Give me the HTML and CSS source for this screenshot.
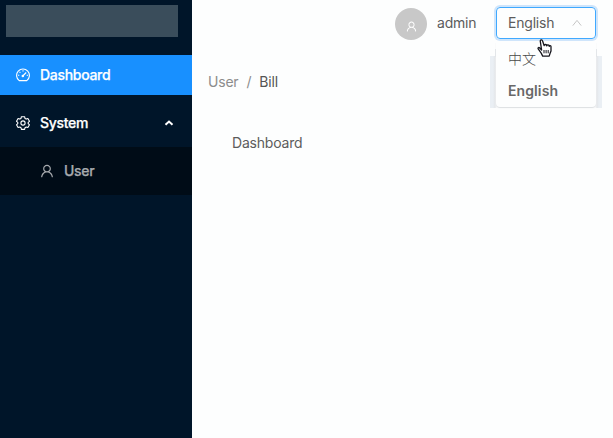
FILE: index.html
```html
<!DOCTYPE html>
<html lang="en">
<head>
<meta charset="utf-8">
<title>Dashboard</title>
<link rel="stylesheet" href="styles.css">
</head>
<body>
<svg class="defs" aria-hidden="true">
  <symbol id="user" viewBox="64 64 896 896"><path fill="currentColor" d="M858.5 763.6a374 374 0 0 0-80.6-119.5 375.63 375.63 0 0 0-119.5-80.6c-.4-.2-.8-.3-1.2-.5C719.5 518 760 444.7 760 362c0-137-111-248-248-248S264 225 264 362c0 82.7 40.5 156 102.8 201.1-.4.2-.8.3-1.2.5-44.8 18.9-85 46-119.5 80.6a375.63 375.63 0 0 0-80.6 119.5A371.7 371.7 0 0 0 136 901.8a8 8 0 0 0 8 8.2h60c4.4 0 7.9-3.5 8-7.8 2-77.2 33-149.5 87.8-204.3 56.7-56.7 132-87.9 212.2-87.9s155.5 31.2 212.2 87.9C779 752.7 810 825 812 902.2c.1 4.4 3.6 7.8 8 7.8h60a8 8 0 0 0 8-8.2c-1-47.8-10.9-94.3-29.5-138.2zM512 534c-45.9 0-89.1-17.9-121.6-50.4S340 407.9 340 362c0-45.9 17.9-89.1 50.4-121.6S466.1 190 512 190s89.1 17.9 121.6 50.4S684 316.1 684 362c0 45.9-17.9 89.1-50.4 121.6S557.9 534 512 534z"/></symbol>
</svg>
<div class="layout">
  <aside class="sider">
    <div class="logo"></div>
    <nav class="menu">
      <a class="item active">
        <svg class="icon" viewBox="0 0 14 14" fill="none" stroke="currentColor" stroke-width="1.1"><path d="M3.2 12.6A6.4 6.4 0 1 1 10.8 12.6Z" stroke-linejoin="round"/><path d="M7 2.2v1.3M3.5 3.8l.9.9M2 7.3h1.3M10.7 7.3H12M6.8 8l3.4-3.5"/><circle cx="6.8" cy="8" r=".7"/></svg>
        <span>Dashboard</span>
      </a>
      <a class="item parent">
        <svg class="icon" viewBox="0 0 14 14" fill="none" stroke="currentColor" stroke-width="1.1" stroke-linejoin="round"><path d="M5.4.7h3.2l.4 1.7 1.2.7 1.7-.6 1.6 2.8-1.3 1.1v1.3l1.3 1.1-1.6 2.7-1.7-.5-1.2.7-.4 1.7H5.4L5 11.7 3.8 11l-1.7.5L.5 8.8l1.3-1.1V6.4L.5 5.3l1.6-2.8 1.7.6L5 2.4Z"/><circle cx="7" cy="7" r="2.1"/></svg>
        <span>System</span>
        <svg class="arrow" viewBox="0 0 10 8" fill="none" stroke="currentColor" stroke-width="2"><path d="M1.5 5.8 5 2.5l3.5 3.3"/></svg>
      </a>
      <div class="submenu">
        <a class="subitem"><svg class="icon"><use href="#user"/></svg><span>User</span></a>
      </div>
    </nav>
  </aside>
  <main class="main">
    <header class="header">
      <div class="avatar"><svg class="avatar-icon"><use href="#user"/></svg></div>
      <span class="name">admin</span>
      <div class="select">
        <span>English</span>
        <svg class="caret" viewBox="0 0 10 8" fill="none" stroke="currentColor"><path d="M.8 6.6 5 1.4l4.2 5.2"/></svg>
        <div class="dropdown">
          <div class="option">中文</div>
          <div class="option selected">English</div>
        </div>
        <svg class="cursor" viewBox="0 0 15 18"><path d="M4.6 11 2.5 8.8C1.7 8 .7 9 1.2 9.9l3 4.2 1.5 3h6.5l.8-2.5 1-2.6V7.6c0-1.3-1.6-1.3-1.8-.3 0-1.7-2.3-1.8-2.5-.5 0-1.7-2.3-1.7-2.6-.3L5.6 2C5.2.4 3 .7 3.3 2.3Z" fill="#fff" stroke="#15151c" stroke-width="1.3" stroke-linejoin="round"/><path d="M7 11v3.3M9.1 11v3.3M11.2 11v3.3" stroke="#15151c"/></svg>
      </div>
    </header>
    <div class="breadcrumb"><span>User</span><span class="separator">/</span><span class="current">Bill</span></div>
    <section class="content">Dashboard</section>
  </main>
</div>
</body>
</html>
```
FILE: styles.css
```css
* { box-sizing: border-box; }
body {
  margin: 0;
  background: #fdfefe;
  color: #5c5c5c;
  font: 14px/22px Inter, "Noto Sans CJK SC", sans-serif;
  letter-spacing: -0.2px;
}
.defs { position: absolute; width: 0; height: 0; }
.layout { display: flex; height: 438px; overflow: hidden; }
.sider { width: 192px; flex: none; background: #001529; }
.logo { height: 32px; margin: 5px 14px 18px 6px; background: #3a4d5b; }
.menu { display: flex; flex-direction: column; gap: 8px; color: #fff; font-weight: 500; letter-spacing: -0.3px; -webkit-text-stroke: .25px currentColor; }
.item { display: flex; align-items: center; height: 40px; padding: 0 18px 0 16px; gap: 10px; }
.active { background: #1890ff; }
.icon { width: 14px; height: 14px; flex: none; }
.arrow { width: 10px; height: 8px; margin-left: auto; }
.submenu { height: 48px; margin-top: -4px; padding: 4px 0; background: #000c17; }
.subitem { display: flex; align-items: center; height: 40px; padding-left: 40px; gap: 10px; color: #a6aaae; }
.main { flex: 1; min-width: 0; }
.header { display: flex; align-items: center; height: 46px; padding-right: 17px; justify-content: flex-end; }
.avatar { display: flex; align-items: center; justify-content: center; width: 32px; height: 32px; margin: 2px 10px 0 0; border-radius: 50%; background: #c8c8c8; color: #fff; }
.avatar-icon { width: 11px; height: 11px; margin-top: 4px; }
.name { width: 59px; }
.select { position: relative; display: flex; align-items: center; justify-content: space-between; width: 100px; height: 32px; padding: 0 12px; border: 1px solid #40a9ff; border-radius: 4px; box-shadow: 0 0 0 2px #cfe5fb; }
.select > span { margin-left: -1px; }
.caret { width: 10px; height: 8px; color: #c5c5c5; margin-right: 1px; }
.dropdown { position: absolute; top: 34px; left: -1px; width: 100px; height: 65px; padding-top: 1px; border-radius: 0 0 4px 4px; background: #fdfefe; box-shadow: 0 1px 1px #dcdfe2; }
.dropdown::before { content: ""; position: absolute; z-index: -1; inset: 14px -6px -1px; background: linear-gradient(90deg, #eaeff4 3px, #e4e7ea 5px, #fdfefe 7px calc(100% - 7px), #e4e7ea calc(100% - 5px), #eaeff4 calc(100% - 3px)); }
.dropdown::after { content: ""; position: absolute; z-index: -1; inset: 7px -1px auto; height: 8px; border: solid #e4e7ea; border-width: 0 1px; }
.option { height: 32px; padding: 5px 12px; letter-spacing: 0; }
.option:first-child { font-weight: 300; color: #484848; }
.selected { color: #686868; font-weight: 600; letter-spacing: .1px; }
.cursor { position: absolute; left: 40px; top: 31px; width: 15px; height: 18px; }
.breadcrumb { display: flex; gap: 8px; margin: 25px 0 0 16px; color: #8c8c8c; }
.current { color: #555; }
.content { margin: 39px 0 0 40px; }
```
